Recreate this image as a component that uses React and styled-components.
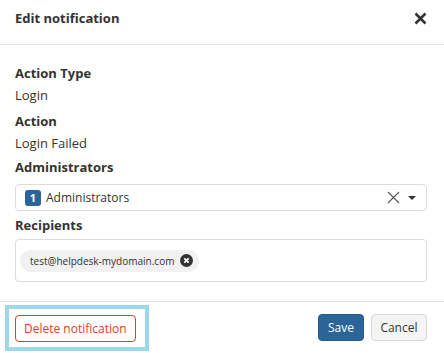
import React from "react";
import styled, { createGlobalStyle } from "styled-components";

const GlobalStyle = createGlobalStyle`
  html, body {
    margin: 0;
    padding: 0;
    background: #fff;
  }
  body {
    font-family: "Open Sans", "Liberation Sans", sans-serif;
    color: #333;
    width: 444px;
    height: 353px;
    overflow: hidden;
  }
`;

const Modal = styled.div`
  display: flex;
  flex-direction: column;
  width: 444px;
  height: 353px;
  background: #fff;
`;

const Header = styled.div`
  display: flex;
  align-items: center;
  justify-content: space-between;
  height: 45px;
  padding: 0 17px 0 15px;
  border-bottom: 1px solid #e5e5e5;
  box-sizing: border-box;
`;

const Title = styled.h1`
  margin: 0;
  font-size: 13px;
  font-weight: 700;
  color: #333;
  line-height: 18px;
  padding-bottom: 8px;
`;

const CloseButton = styled.button`
  display: flex;
  align-items: center;
  justify-content: center;
  width: 14px;
  height: 14px;
  padding: 0;
  border: none;
  background: none;
  margin-bottom: 7px;
  cursor: pointer;
`;

const Body = styled.div`
  display: flex;
  flex-direction: column;
  padding: 18px 17px 19px 15px;
  border-bottom: 1px solid #e5e5e5;
`;

const Label = styled.div`
  font-size: 13px;
  font-weight: 700;
  line-height: 20px;
  margin-bottom: ${({ gap }) => gap ?? 2}px;
`;

const Value = styled.div`
  font-size: 13px;
  line-height: 20px;
  margin-bottom: ${({ gap }) => gap ?? 6}px;
`;

const Select = styled.div`
  display: flex;
  align-items: center;
  height: 27px;
  box-sizing: border-box;
  border: 1px solid #dcdcdc;
  border-radius: 4px;
  padding: 0 10px 0 9px;
  margin-bottom: 4px;
`;

const Count = styled.span`
  display: inline-flex;
  align-items: center;
  justify-content: center;
  width: 16px;
  height: 16px;
  border-radius: 3px;
  background: #2b6499;
  color: #fff;
  font-size: 11px;
  font-weight: 700;
  margin-right: 5px;
`;

const SelectText = styled.span`
  flex: 1;
  font-size: 12px;
`;

const SelectIcons = styled.div`
  display: flex;
  align-items: center;
  gap: 8px;
`;

const TagBox = styled.div`
  display: flex;
  align-items: center;
  flex-wrap: wrap;
  height: 43px;
  box-sizing: border-box;
  border: 1px solid #dcdcdc;
  border-radius: 4px;
  padding: 0 4px;
`;

const Chip = styled.span`
  display: inline-flex;
  align-items: center;
  gap: 6px;
  height: 22px;
  padding: 0 6px 0 10px;
  border-radius: 11px;
  background: #f1f1f1;
  font-size: 10px;
  color: #333;
`;

const Footer = styled.div`
  display: flex;
  align-items: center;
  justify-content: space-between;
  flex: 1;
  padding: 0 17px 0 5px;
`;

const Focus = styled.div`
  display: flex;
  border: 4px solid #9dd8e8;
  padding: 6px 9px 5px 6px;
`;

const Button = styled.button`
  height: 27px;
  padding: 0 ${({ pad }) => pad ?? 10}px;
  border-radius: 4px;
  font-family: "Open Sans", "Liberation Sans", sans-serif;
  font-size: 12px;
  cursor: pointer;
  border: 1px solid ${({ variant }) =>
    variant === "danger" ? "#e5392b" : variant === "primary" ? "#245a8c" : "#d9d9d9"};
  background: ${({ variant }) =>
    variant === "primary" ? "#2b6499" : variant === "danger" ? "#fff" : "#f4f4f4"};
  color: ${({ variant }) =>
    variant === "primary" ? "#fff" : variant === "danger" ? "#e5392b" : "#333"};
`;

const Actions = styled.div`
  display: flex;
  gap: 7px;
`;

export default function App() {
  return (
    <>
      <GlobalStyle />
      <Modal>
        <Header>
          <Title>Edit notification</Title>
          <CloseButton aria-label="Close">
            <svg width="13" height="13" viewBox="0 0 13 13">
              <path d="M1.5 1.5L11.5 11.5M11.5 1.5L1.5 11.5" stroke="#333" strokeWidth="2.6" strokeLinecap="butt" />
            </svg>
          </CloseButton>
        </Header>
        <Body>
          <Label>Action Type</Label>
          <Value>Login</Value>
          <Label>Action</Label>
          <Value gap={4}>Login Failed</Value>
          <Label gap={7}>Administrators</Label>
          <Select>
            <Count>1</Count>
            <SelectText>Administrators</SelectText>
            <SelectIcons>
              <svg width="13" height="13" viewBox="0 0 13 13">
                <path d="M1 1L12 12M12 1L1 12" stroke="#555" strokeWidth="1.1" />
              </svg>
              <svg width="8" height="4" viewBox="0 0 8 4">
                <path d="M0 0H8L4 4Z" fill="#333" />
              </svg>
            </SelectIcons>
          </Select>
          <Label gap={4}>Recipients</Label>
          <TagBox>
            <Chip>
              test@helpdesk-mydomain.com
              <svg width="13" height="13" viewBox="0 0 13 13">
                <circle cx="6.5" cy="6.5" r="6.5" fill="#333" />
                <path d="M4.3 4.3L8.7 8.7M8.7 4.3L4.3 8.7" stroke="#fff" strokeWidth="1.8" />
              </svg>
            </Chip>
          </TagBox>
        </Body>
        <Footer>
          <Focus>
            <Button variant="danger" pad={8}>Delete notification</Button>
          </Focus>
          <Actions>
            <Button variant="primary" pad={9}>Save</Button>
            <Button pad={8.5}>Cancel</Button>
          </Actions>
        </Footer>
      </Modal>
    </>
  );
}
